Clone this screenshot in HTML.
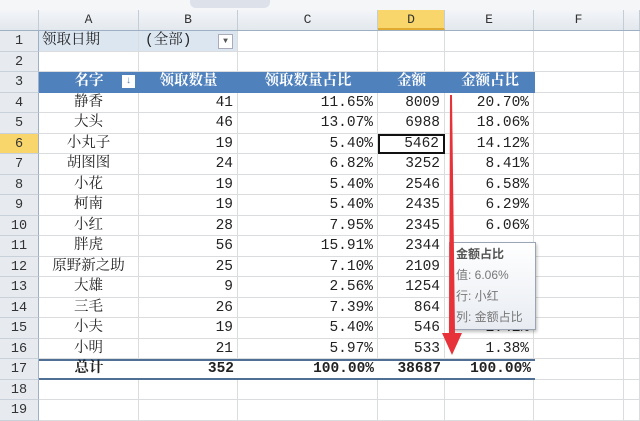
<!DOCTYPE html>
<html><head><meta charset="utf-8"><style>
body{margin:0;width:640px;height:410px;overflow:hidden;background:#fff;font-family:"Liberation Mono","Noto Serif CJK SC",monospace;font-size:14.5px;color:#222;position:relative}
.top{position:absolute;left:0;top:0;width:640px;height:10px;background:#f4f6f8;border-bottom:1px solid #b8c0cc}
.top .nb{position:absolute;left:190px;top:0;width:80px;height:8px;background:#dde2ea;border-radius:0 0 6px 6px}
.hdr{position:absolute;top:10px;left:0;height:20px;width:640px;display:flex;background:linear-gradient(#f3f5f8,#e3e8ee);border-bottom:1px solid #9eb0c4}
.hdr div{border-right:1px solid #c3cdd8;text-align:center;line-height:20px;font-size:13px;color:#333;box-sizing:border-box}
.row{position:absolute;left:0;height:20.5px;display:flex;width:640px}
.row div{box-sizing:border-box;border-right:1px solid #dadcdd;border-bottom:1px solid #dadcdd;line-height:21px;white-space:nowrap;overflow:visible}
.row .n{background:#e7ebf0;color:#333;text-align:center;border-right:1px solid #9eb0c4;border-bottom:1px solid #c8d0da;font-size:13.5px}
.r{text-align:right;padding-right:4px}
.c{text-align:center}
.blue div.b{background:#4f81bd;color:#fff;font-weight:bold;border-right:none;border-bottom:none}
.tot div.t{font-weight:bold;border-top:2px solid #4f6f95;border-bottom:2px solid #4f6f95;border-right:none;line-height:17px}
</style></head><body>
<div class="top"><div class="nb"></div></div>
<div class="hdr"><div style="width:39px"></div><div style="width:100px">A</div><div style="width:99px">B</div><div style="width:140px">C</div><div style="width:67px;background:#f9d66b;border-bottom:2px solid #e0a92f">D</div><div style="width:89px">E</div><div style="width:90px">F</div><div style="width:16px"></div></div>

<div class="row" style="top:31px"><div class="n" style="width:39px">1</div><div style="width:100px;background:#dce6f1;padding-left:3px">领取日期</div><div style="width:99px;background:#dce6f1;padding-left:6px;position:relative">(全部)<span style="position:absolute;right:4px;top:3px;width:13px;height:13px;border:1px solid #aab;background:#fff;font-size:8px;line-height:13px;text-align:center;color:#555">▼</span></div><div style="width:140px"></div><div style="width:67px"></div><div style="width:89px"></div><div style="width:90px"></div><div style="width:16px"></div></div>
<div class="row" style="top:51.5px"><div class="n" style="width:39px">2</div><div style="width:100px"></div><div style="width:99px"></div><div style="width:140px"></div><div style="width:67px"></div><div style="width:89px"></div><div style="width:90px"></div><div style="width:16px"></div></div>
<div class="row blue" style="top:72px"><div class="n" style="width:39px">3</div><div class="b c" style="width:100px;position:relative">名字<span style="position:absolute;right:4px;top:3px;width:13px;height:13px;background:#fff;color:#4f81bd;font-size:10px;line-height:13px">↓</span></div><div class="b c" style="width:99px">领取数量</div><div class="b c" style="width:140px">领取数量占比</div><div class="b c" style="width:67px">金额</div><div class="b c" style="width:90px">金额占比</div><div style="width:89px"></div><div style="width:16px"></div></div>

<div class="row" style="top:92.5px"><div class="n" style="width:39px">4</div><div class="c" style="width:100px">静香</div><div class="r" style="width:99px">41</div><div class="r" style="width:140px">11.65%</div><div class="r" style="width:67px">8009</div><div class="r" style="width:89px">20.70%</div><div style="width:90px"></div><div style="width:16px"></div></div>
<div class="row" style="top:113px"><div class="n" style="width:39px">5</div><div class="c" style="width:100px">大头</div><div class="r" style="width:99px">46</div><div class="r" style="width:140px">13.07%</div><div class="r" style="width:67px">6988</div><div class="r" style="width:89px">18.06%</div><div style="width:90px"></div><div style="width:16px"></div></div>
<div class="row" style="top:133.5px"><div class="n" style="width:39px;background:#f9d66b">6</div><div class="c" style="width:100px">小丸子</div><div class="r" style="width:99px">19</div><div class="r" style="width:140px">5.40%</div><div class="r" style="width:67px;border:2px solid #111;line-height:17px">5462</div><div class="r" style="width:89px">14.12%</div><div style="width:90px"></div><div style="width:16px"></div></div>
<div class="row" style="top:154px"><div class="n" style="width:39px">7</div><div class="c" style="width:100px">胡图图</div><div class="r" style="width:99px">24</div><div class="r" style="width:140px">6.82%</div><div class="r" style="width:67px">3252</div><div class="r" style="width:89px">8.41%</div><div style="width:90px"></div><div style="width:16px"></div></div>
<div class="row" style="top:174.5px"><div class="n" style="width:39px">8</div><div class="c" style="width:100px">小花</div><div class="r" style="width:99px">19</div><div class="r" style="width:140px">5.40%</div><div class="r" style="width:67px">2546</div><div class="r" style="width:89px">6.58%</div><div style="width:90px"></div><div style="width:16px"></div></div>
<div class="row" style="top:195px"><div class="n" style="width:39px">9</div><div class="c" style="width:100px">柯南</div><div class="r" style="width:99px">19</div><div class="r" style="width:140px">5.40%</div><div class="r" style="width:67px">2435</div><div class="r" style="width:89px">6.29%</div><div style="width:90px"></div><div style="width:16px"></div></div>
<div class="row" style="top:215.5px"><div class="n" style="width:39px">10</div><div class="c" style="width:100px">小红</div><div class="r" style="width:99px">28</div><div class="r" style="width:140px">7.95%</div><div class="r" style="width:67px">2345</div><div class="r" style="width:89px">6.06%</div><div style="width:90px"></div><div style="width:16px"></div></div>
<div class="row" style="top:236px"><div class="n" style="width:39px">11</div><div class="c" style="width:100px">胖虎</div><div class="r" style="width:99px">56</div><div class="r" style="width:140px">15.91%</div><div class="r" style="width:67px">2344</div><div class="r" style="width:89px"></div><div style="width:90px"></div><div style="width:16px"></div></div>
<div class="row" style="top:256.5px"><div class="n" style="width:39px">12</div><div class="c" style="width:100px">原野新之助</div><div class="r" style="width:99px">25</div><div class="r" style="width:140px">7.10%</div><div class="r" style="width:67px">2109</div><div class="r" style="width:89px"></div><div style="width:90px"></div><div style="width:16px"></div></div>
<div class="row" style="top:277px"><div class="n" style="width:39px">13</div><div class="c" style="width:100px">大雄</div><div class="r" style="width:99px">9</div><div class="r" style="width:140px">2.56%</div><div class="r" style="width:67px">1254</div><div class="r" style="width:89px"></div><div style="width:90px"></div><div style="width:16px"></div></div>
<div class="row" style="top:297.5px"><div class="n" style="width:39px">14</div><div class="c" style="width:100px">三毛</div><div class="r" style="width:99px">26</div><div class="r" style="width:140px">7.39%</div><div class="r" style="width:67px">864</div><div class="r" style="width:89px"></div><div style="width:90px"></div><div style="width:16px"></div></div>
<div class="row" style="top:318px"><div class="n" style="width:39px">15</div><div class="c" style="width:100px">小夫</div><div class="r" style="width:99px">19</div><div class="r" style="width:140px">5.40%</div><div class="r" style="width:67px">546</div><div class="r" style="width:89px">1.41%</div><div style="width:90px"></div><div style="width:16px"></div></div>
<div class="row" style="top:338.5px"><div class="n" style="width:39px">16</div><div class="c" style="width:100px">小明</div><div class="r" style="width:99px">21</div><div class="r" style="width:140px">5.97%</div><div class="r" style="width:67px">533</div><div class="r" style="width:89px">1.38%</div><div style="width:90px"></div><div style="width:16px"></div></div>
<div class="row tot" style="top:359px"><div class="n" style="width:39px">17</div><div class="t c" style="width:100px">总计</div><div class="t r" style="width:99px">352</div><div class="t r" style="width:140px">100.00%</div><div class="t r" style="width:67px">38687</div><div class="t r" style="width:90px">100.00%</div><div style="width:89px"></div><div style="width:16px"></div></div>
<div class="row" style="top:379.5px"><div class="n" style="width:39px">18</div><div style="width:100px"></div><div style="width:99px"></div><div style="width:140px"></div><div style="width:67px"></div><div style="width:89px"></div><div style="width:90px"></div><div style="width:16px"></div></div>
<div class="row" style="top:400px"><div class="n" style="width:39px">19</div><div style="width:100px"></div><div style="width:99px"></div><div style="width:140px"></div><div style="width:67px"></div><div style="width:89px"></div><div style="width:90px"></div><div style="width:16px"></div></div>

<div style="position:absolute;left:449px;top:242px;width:87px;height:88px;background:linear-gradient(#fff,#e8ecf2);border:1px solid #9aa4b2;box-shadow:1px 2px 3px rgba(0,0,0,.25);font-family:'Liberation Sans','Noto Sans CJK SC',sans-serif;font-size:12px;color:#777;line-height:21px;padding-left:6px;padding-top:1px;box-sizing:border-box">
<div style="font-weight:bold;color:#555">金额占比</div><div>值: 6.06%</div><div>行: 小红</div><div>列: 金额占比</div></div>

<svg style="position:absolute;left:0;top:0" width="640" height="410"><polygon points="450,95 452,95 455,333 462,333 452,355 442,333 449,333" fill="#e8323a"/></svg>
</body></html>
